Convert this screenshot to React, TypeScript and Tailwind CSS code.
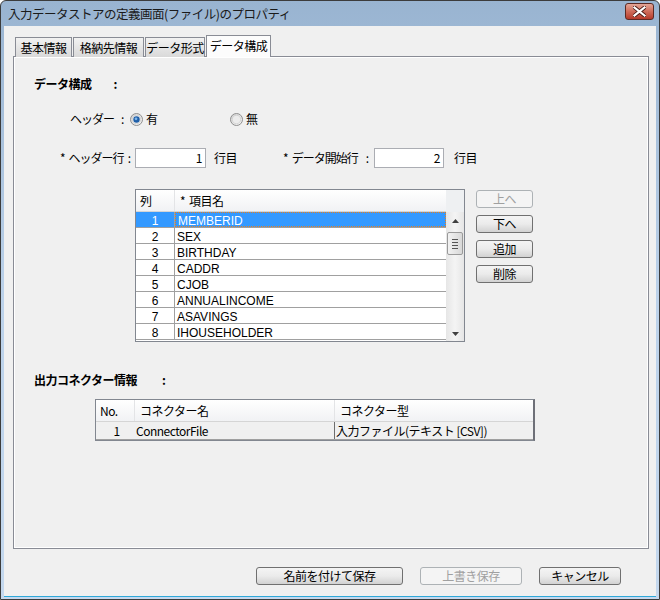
const rows = [
  'MEMBERID',
  'SEX',
  'BIRTHDAY',
  'CADDR',
  'CJOB',
  'ANNUALINCOME',
  'ASAVINGS',
  'IHOUSEHOLDER',
]

function Radio({ checked }: { checked?: boolean }) {
  return (
    <svg width="13" height="13" viewBox="0 0 13 13" className="shrink-0">
      <defs>
        <linearGradient id={checked ? 'rg1' : 'rg0'} x1="0" y1="0" x2="1" y2="1">
          <stop offset="0" stopColor="#d0d0d0" />
          <stop offset="1" stopColor="#f8f8f8" />
        </linearGradient>
      </defs>
      <circle cx="6.5" cy="6.5" r="6" fill={`url(#${checked ? 'rg1' : 'rg0'})`} stroke="#8f8f8f" />
      <circle cx="6.5" cy="6.5" r="4.2" fill="#ececec" stroke="#c8c8c8" strokeWidth="0.6" />
      {checked && (
        <>
          <circle cx="6.5" cy="6.5" r="3.2" fill="#1f5fa8" />
          <circle cx="6" cy="5.8" r="1.4" fill="#7fb6ea" />
        </>
      )}
    </svg>
  )
}

function Btn({ label, w, disabled }: { label: string; w: string; disabled?: boolean }) {
  return (
    <div
      className={
        disabled
          ? `${w} h-[18px] shrink-0 flex items-center justify-center rounded-[3px] border border-[#adb2b5] bg-[#f4f4f4] text-[#a0a0a0]`
          : `${w} h-[18px] shrink-0 flex items-center justify-center rounded-[3px] border border-[#707070] bg-gradient-to-b from-[#f4f4f4] via-[#ebebeb] to-[#d2d2d2] text-black`
      }
    >
      <span className="leading-none whitespace-nowrap">{label}</span>
    </div>
  )
}

export default function App() {
  return (
    <div
      className="w-[660px] h-[600px] flex flex-col border border-[#3c3c3c] rounded-t-[6px] bg-gradient-to-b from-[#99b4d1] via-[#bcd2ea] to-[#c4d8ee] overflow-hidden text-[12px] tracking-[-0.5px] text-black whitespace-nowrap"
      style={{ fontFamily: '"Noto Sans CJK JP", "Liberation Sans", sans-serif' }}
    >
      {/* title bar */}
      <div className="h-[25px] flex items-center justify-between pl-[7px] pr-[5px] shrink-0">
        <span className="text-[12.5px] text-[#1a1a1a] leading-none pt-[1px]">
          入力データストアの定義画面(ファイル)のプロパティ
        </span>
        <div className="w-[29px] h-[17px] mt-[-4px] rounded-[3px] border border-[#5b2a24] bg-gradient-to-b from-[#e3a597] via-[#cf6c5a] to-[#b5392a] flex items-center justify-center">
          <svg width="13" height="11" viewBox="0 0 13 11">
            <path
              d="M1.5 1.5 L11.5 9.5 M11.5 1.5 L1.5 9.5"
              stroke="#4a1c17"
              strokeWidth="4"
              strokeLinecap="square"
            />
            <path
              d="M1.5 1.5 L11.5 9.5 M11.5 1.5 L1.5 9.5"
              stroke="#ffffff"
              strokeWidth="2.2"
              strokeLinecap="square"
            />
          </svg>
        </div>
      </div>

      {/* body */}
      <div className="flex-1 mx-[3px] mb-[3px] bg-[#f0f0f0] flex flex-col pt-[9px] shadow-[0_1px_0_#2fa8d8]">
        {/* tabs */}
        <div className="h-[22px] flex items-end gap-[1px] ml-[11px] relative z-10">
          {['基本情報', '格納先情報', 'データ形式'].map((t, i) => (
            <div
              key={t}
              className={`h-[20px] ${['w-[57px]', 'w-[71px]', 'w-[60px]'][i]} border border-b-0 border-[#898c95] bg-gradient-to-b from-[#f2f2f2] to-[#d9d9d9] flex items-center justify-center leading-none`}
            >
              {t}
            </div>
          ))}
          <div className="h-[22px] w-[65px] border border-b-0 border-[#898c95] bg-[#fcfcfc] flex items-center justify-center leading-none pb-[1px]">
            データ構成
          </div>
        </div>

        {/* panel */}
        <div className="ml-[9px] w-[636px] h-[493px] -mt-[1px] border border-[#898c95] shadow-[inset_1px_1px_0_#ffffff,inset_-1px_-1px_0_#ffffff] bg-[#f0f0f0] flex flex-col pt-[19px]">
          <div className="h-[16px] flex items-center ml-[20px] font-bold leading-none">
            <span>データ構成</span>
            <span className="ml-[22px]">:</span>
          </div>

          {/* header radio row */}
          <div className="h-[16px] mt-[19px] flex items-center ml-[56px] leading-none">
            <div className="w-[60px] flex tracking-[-1px]">
              <span>ヘッダー</span>
              <span className="ml-[7px]">:</span>
            </div>
            <div className="w-[100px] flex items-center gap-[3px]">
              <Radio checked />
              <span>有</span>
            </div>
            <div className="flex items-center gap-[3px]">
              <Radio />
              <span>無</span>
            </div>
          </div>

          {/* header row inputs */}
          <div className="h-[20px] mt-[21px] flex items-center ml-[46px] leading-none">
            <div className="w-[75px] shrink-0 flex justify-between pr-[5px] tracking-[-1px]">
              <span>
                <span className="mr-[4px]">*</span>ヘッダー行
              </span>
              <span>:</span>
            </div>
            <div className="w-[71px] h-[20px] shrink-0 bg-white border border-[#abadb3] flex items-center justify-end pr-[3px]">
              1
            </div>
            <span className="ml-[8px]">行目</span>
            <div className="ml-[46px] w-[91px] shrink-0 flex justify-between pr-[6px] tracking-[-1px]">
              <span>
                <span className="mr-[4px]">*</span>データ開始行
              </span>
              <span>:</span>
            </div>
            <div className="w-[70px] h-[20px] shrink-0 bg-white border border-[#abadb3] flex items-center justify-end pr-[3px]">
              2
            </div>
            <span className="ml-[10px]">行目</span>
          </div>

          {/* grid + buttons */}
          <div className="mt-[21px] ml-[121px] flex items-start">
            <div className="w-[330px] h-[153px] border border-[#828790] bg-white flex">
              <div className="w-[310px] flex flex-col">
                <div className="h-[22px] flex border-b border-[#d5d5d5] bg-gradient-to-b from-[#ffffff] to-[#f1f2f4] leading-none">
                  <div className="w-[39px] border-r border-[#e3e4e6] flex items-center pl-[4px]">列</div>
                  <div className="flex-1 flex items-center pl-[5px]">
                    <span className="mr-[4px]">*</span>項目名
                  </div>
                </div>
                {rows.map((r, i) => (
                  <div
                    key={r}
                    className={`h-[16px] flex border-b border-[#a0a0a0] leading-none tracking-normal ${i === 0 ? 'bg-[#3399ff] text-white' : ''}`}
                    style={{ fontFamily: '"Liberation Sans", sans-serif' }}
                  >
                    <div className="w-[39px] border-r border-[#a0a0a0] flex items-center justify-center pt-[3px]">{i + 1}</div>
                    <div
                      className={`flex-1 flex items-center pl-[2px] pt-[3px] ${i === 0 ? 'border border-dotted border-[#e8801c]' : ''}`}
                    >
                      {r}
                    </div>
                  </div>
                ))}
              </div>
              <div className="w-[18px] flex flex-col bg-[#ececec]">
                <div className="h-[22px] bg-[#eef0f2]" />
                <div className="flex-1 flex flex-col bg-gradient-to-r from-[#e6e6e6] via-[#f4f4f4] to-[#e6e6e6]">
                  <div className="h-[17px] flex items-center justify-center">
                    <svg width="7" height="4" viewBox="0 0 7 4">
                      <path d="M0 4 L3.5 0 L7 4 Z" fill="#404040" />
                    </svg>
                  </div>
                  <div className="mx-[1px] mt-[3px] h-[23px] rounded-[2px] border border-[#9a9a9a] bg-gradient-to-r from-[#f2f2f2] to-[#d8d8d8] flex flex-col items-center justify-center gap-[2px]">
                    <div className="w-[6px] h-[1px] bg-[#555]" />
                    <div className="w-[6px] h-[1px] bg-[#555]" />
                    <div className="w-[6px] h-[1px] bg-[#555]" />
                    <div className="w-[6px] h-[1px] bg-[#555]" />
                  </div>
                  <div className="flex-1" />
                  <div className="h-[15px] flex items-center justify-center">
                    <svg width="7" height="4" viewBox="0 0 7 4">
                      <path d="M0 0 L7 0 L3.5 4 Z" fill="#404040" />
                    </svg>
                  </div>
                </div>
              </div>
            </div>
            <div className="ml-[11px] mt-[1px] flex flex-col gap-[7px]">
              <Btn label="上へ" w="w-[57px]" disabled />
              <Btn label="下へ" w="w-[57px]" />
              <Btn label="追加" w="w-[57px]" />
              <Btn label="削除" w="w-[57px]" />
            </div>
          </div>

          {/* output connector */}
          <div className="h-[16px] mt-[30px] flex items-center ml-[20px] font-bold leading-none">
            <span>出力コネクター情報</span>
            <span className="ml-[25px]">:</span>
          </div>

          <div className="mt-[11px] ml-[81px] w-[440px] border border-[#828790] border-r-2 border-r-[#6e7078] flex flex-col leading-none">
            <div className="h-[22px] flex bg-gradient-to-b from-[#ffffff] to-[#f1f2f4] border-b border-[#d5d5d5]">
              <div className="w-[39px] border-r border-[#e3e4e6] flex items-center pl-[4px]">No.</div>
              <div className="w-[200px] border-r border-[#e3e4e6] flex items-center pl-[5px]">コネクター名</div>
              <div className="flex-1 flex items-center pl-[5px]">コネクター型</div>
            </div>
            <div className="h-[18px] flex bg-[#f0f0f0] border-b border-[#a0a0a0]">
              <div className="w-[39px] flex items-center justify-center pl-[2px]">1</div>
              <div className="w-[200px] border-r border-[#6e6e6e] flex items-center pl-[1px]">ConnectorFile</div>
              <div className="flex-1 flex items-center pl-[1px]">入力ファイル(テキスト [CSV])</div>
            </div>
          </div>
        </div>

        {/* bottom buttons */}
        <div className="mt-[18px] flex justify-end pr-[35px] gap-[17px]">
          <Btn label="名前を付けて保存" w="w-[147px]" />
          <Btn label="上書き保存" w="w-[102px]" disabled />
          <Btn label="キャンセル" w="w-[82px]" />
        </div>
      </div>
    </div>
  )
}
